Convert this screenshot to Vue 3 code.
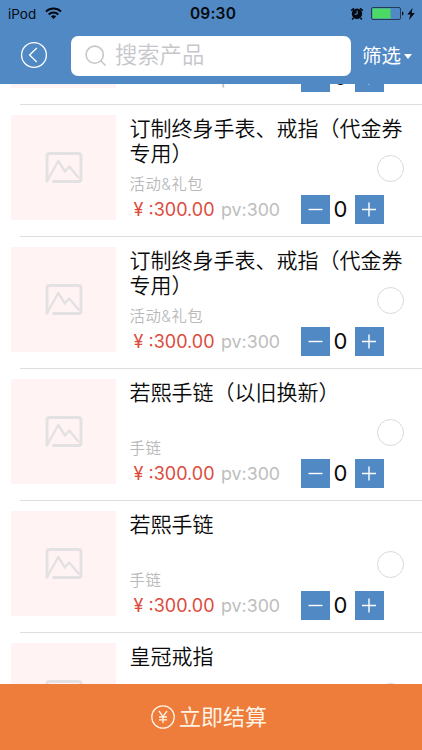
<template>
  <div class="page">
    <header class="header">
      <!-- Status bar -->
      <div class="status-bar">
        <div class="carrier">
          <span>iPod</span>
          <svg width="17" height="13" viewBox="0 0 17 13" fill="none" stroke="#05090f" stroke-width="2">
            <path d="M1 4.6C5.2 .6 11.8 .6 16 4.6" />
            <path d="M3.7 7.4C6.4 4.9 10.6 4.9 13.3 7.4" />
            <path d="M5.8 9.3C7.4 8 9.6 8 11.2 9.3L8.5 12Z" fill="#05090f" stroke="none" />
          </svg>
        </div>
        <span class="time">09:30</span>
        <div class="power">
          <svg width="14" height="13" viewBox="0 0 14 13">
            <circle cx="7" cy="6.8" r="5.2" fill="#05090f" />
            <path d="M1.2 3.6L4 1.3M12.8 3.6L10 1.3M3.4 11L2.2 12.4M10.6 11L11.8 12.4" stroke="#05090f" stroke-width="1.6" />
            <path d="M7.2 3.6V7.2H4.6" fill="none" stroke="#5189c5" stroke-width="1" />
          </svg>
          <svg class="battery" width="33" height="13" viewBox="0 0 33 13">
            <rect x=".5" y=".5" width="29" height="12" rx="1.5" fill="none" stroke="#233b57" />
            <rect x="1.5" y="1.5" width="18" height="10" fill="#4cd964" />
            <path d="M31 4.5C33 5 33 8 31 8.5Z" fill="#05090f" />
          </svg>
          <svg width="8" height="12" viewBox="0 0 8 12">
            <path d="M5.6 0L.3 6.6H3.4L2 12L7.8 4.9H4.6Z" fill="#05090f" />
          </svg>
        </div>
      </div>

      <!-- Search bar -->
      <div class="nav-bar">
        <button class="back-btn">
          <svg width="28" height="28" viewBox="0 0 28 28" fill="none" stroke="#fff" stroke-width="1.3">
            <circle cx="14" cy="14" r="12.4" />
            <path d="M16.8 7L9.6 14L16.8 21" />
          </svg>
        </button>
        <div class="search-box">
          <svg width="22" height="22" viewBox="0 0 22 22" fill="none" stroke="#c6c6cb" stroke-width="1.6">
            <circle cx="9.7" cy="9.7" r="8.6" />
            <path d="M15.8 15.8L20.5 20.5" />
          </svg>
          <span>搜索产品</span>
        </div>
        <button class="filter-btn">筛选<i class="caret"></i></button>
      </div>
    </header>

    <!-- Product list -->
    <main class="list">
      <div v-for="item in products" :key="item.id" class="item">
        <div class="thumb">
          <svg width="38" height="32" viewBox="0 0 38 32" fill="none" stroke="#e4e1e4" stroke-width="3" stroke-linejoin="round" stroke-linecap="round">
            <path d="M8.5 29.5H33.5Q36 29.5 36 27V4Q36 1.5 33.5 1.5H4.5Q2 1.5 2 4V29" />
            <path d="M2 29L13.3 9L20 19.5L24.2 14.5L33.5 25.5" stroke-width="2.4" />
          </svg>
        </div>
        <div class="info">
          <div class="title">{{ item.name }}</div>
          <div class="category">{{ item.category }}</div>
          <div class="price-row">
            <span class="price"><span class="yen">¥</span>:{{ item.price }}</span>
            <span class="pv">pv:{{ item.pv }}</span>
            <div class="stepper">
              <button class="step-btn" @click="decrease(item)">
                <svg width="29" height="29" viewBox="0 0 29 29" stroke="#fff" stroke-width="1.4"><path d="M7.5 14.5H21.5" /></svg>
              </button>
              <span class="count">{{ item.count }}</span>
              <button class="step-btn" @click="item.count++">
                <svg width="29" height="29" viewBox="0 0 29 29" stroke="#fff" stroke-width="1.4"><path d="M7 14.5H21M14 7.5V21.5" /></svg>
              </button>
            </div>
          </div>
        </div>
        <span class="radio" :class="{ checked: item.checked }" @click="item.checked = !item.checked"></span>
      </div>
    </main>

    <button class="checkout">
      <svg width="24" height="24" viewBox="0 0 24 24" fill="none" stroke="#fff3e6" stroke-width="1.3">
        <circle cx="12" cy="12" r="11.2" />
        <path d="M8 6L12 11.6L16 6M12 11.6V18M8 12H16M8 14.8H16" />
      </svg>
      <span>立即结算</span>
    </button>
  </div>
</template>

<script setup>
import { ref } from 'vue'

const products = ref([
  { id: 1, name: '订制终身手表、戒指（代金券专用）', category: '活动&礼包', price: '300.00', pv: 300, count: 0, checked: false },
  { id: 2, name: '订制终身手表、戒指（代金券专用）', category: '活动&礼包', price: '300.00', pv: 300, count: 0, checked: false },
  { id: 3, name: '订制终身手表、戒指（代金券专用）', category: '活动&礼包', price: '300.00', pv: 300, count: 0, checked: false },
  { id: 4, name: '若熙手链（以旧换新）', category: '手链', price: '300.00', pv: 300, count: 0, checked: false },
  { id: 5, name: '若熙手链', category: '手链', price: '300.00', pv: 300, count: 0, checked: false },
  { id: 6, name: '皇冠戒指', category: '戒指', price: '300.00', pv: 300, count: 0, checked: false }
])

function decrease(item) {
  if (item.count > 0) item.count--
}
</script>

<style>
body {
  margin: 0;
  background: #fff;
}
</style>

<style scoped>
.page {
  height: 750px;
  display: flex;
  flex-direction: column;
  overflow: hidden;
  background: #fff;
  font-family: Inter, 'Noto Sans CJK SC', sans-serif;
}
button {
  border: none;
  padding: 0;
  margin: 0;
  background: none;
  font-family: inherit;
  color: inherit;
}
svg {
  display: block;
  flex: none;
}
.header {
  flex: none;
  height: 84px;
  background: #5189c5;
}
.status-bar {
  height: 27px;
  padding: 0 7px 0 8px;
  display: grid;
  grid-template-columns: 1fr auto 1fr;
  align-items: center;
  color: #05090f;
  font-size: 13.5px;
}
.carrier {
  display: flex;
  align-items: center;
  gap: 9px;
}
.time {
  padding-left: 3px;
  font-size: 15.5px;
  line-height: 20px;
  font-weight: 600;
  letter-spacing: 0.2px;
}
.power {
  display: flex;
  align-items: center;
  justify-content: flex-end;
}
.battery {
  margin: 0 3px 0 7px;
}
.nav-bar {
  display: flex;
  align-items: center;
  padding: 9px 9px 0 20px;
}
.back-btn {
  margin-top: -2px;
}
.search-box {
  width: 280px;
  height: 40px;
  margin: 0 11px 0 23px;
  padding-left: 14px;
  box-sizing: border-box;
  display: flex;
  align-items: center;
  gap: 8px;
  border-radius: 7px;
  background: #fff;
  color: #c6c6cb;
  font-size: 22.3px;
  font-weight: 350;
  line-height: 36px;
}
.search-box span {
  margin-top: -2px;
}
.filter-btn {
  display: flex;
  align-items: center;
  gap: 3px;
  color: #fff;
  font-size: 19.5px;
  line-height: 28px;
  white-space: nowrap;
}
.caret {
  border: 4.5px solid transparent;
  border-top: 5px solid #fff;
  border-bottom: 0;
}
.list {
  flex: 1;
  min-height: 0;
  overflow: hidden;
}
.item {
  height: 132px;
  box-sizing: border-box;
  padding: 10px 18px 0 11px;
  display: flex;
  background: linear-gradient(#dedede, #dedede) 20px 100% / 100% 1px no-repeat;
}
/* list is scrolled part way into the first product */
.item:first-child {
  margin-top: -111px;
}
.thumb {
  flex: none;
  width: 105px;
  height: 105px;
  display: flex;
  align-items: center;
  justify-content: center;
  background: #fff4f3;
}
.info {
  width: 274.5px;
  flex: none;
  margin-left: 13.5px;
}
.title {
  height: 50px;
  margin-top: 1px;
  color: #0a0a0a;
  font-size: 21px;
  font-weight: 350;
  line-height: 25px;
}
.category {
  margin-top: 9px;
  color: #b9b9b9;
  font-size: 15.4px;
  font-weight: 350;
  letter-spacing: 0.5px;
  line-height: 20px;
}
.price-row {
  display: flex;
  align-items: center;
  height: 29px;
}
.price {
  width: 91.5px;
  color: #dc4b3d;
  font-size: 18px;
  white-space: nowrap;
}
.yen {
  display: inline-block;
  width: 19px;
  padding-left: 4px;
  box-sizing: border-box;
}
.pv {
  width: 80px;
  color: #bdbdbd;
  font-size: 17.8px;
}
.stepper {
  display: flex;
  align-items: center;
}
.step-btn {
  width: 29px;
  height: 29px;
  background: #5189c5;
}
.count {
  width: 25px;
  margin-top: -1px;
  padding-right: 4px;
  box-sizing: border-box;
  text-align: center;
  color: #0a0a0a;
  font-size: 22px;
}
.radio {
  flex: none;
  width: 27px;
  height: 27px;
  margin: 40px 0 0 -27px;
  box-sizing: border-box;
  border: 1px solid #d9d9d9;
  border-radius: 50%;
}
.radio.checked {
  background: #5189c5;
}
.checkout {
  flex: none;
  height: 66px;
  padding-right: 4px;
  display: flex;
  align-items: center;
  justify-content: center;
  gap: 4px;
  background: #ee7c3a;
  color: #fff3e6;
  font-size: 22px;
}
.checkout span {
  line-height: 30px;
}
</style>
